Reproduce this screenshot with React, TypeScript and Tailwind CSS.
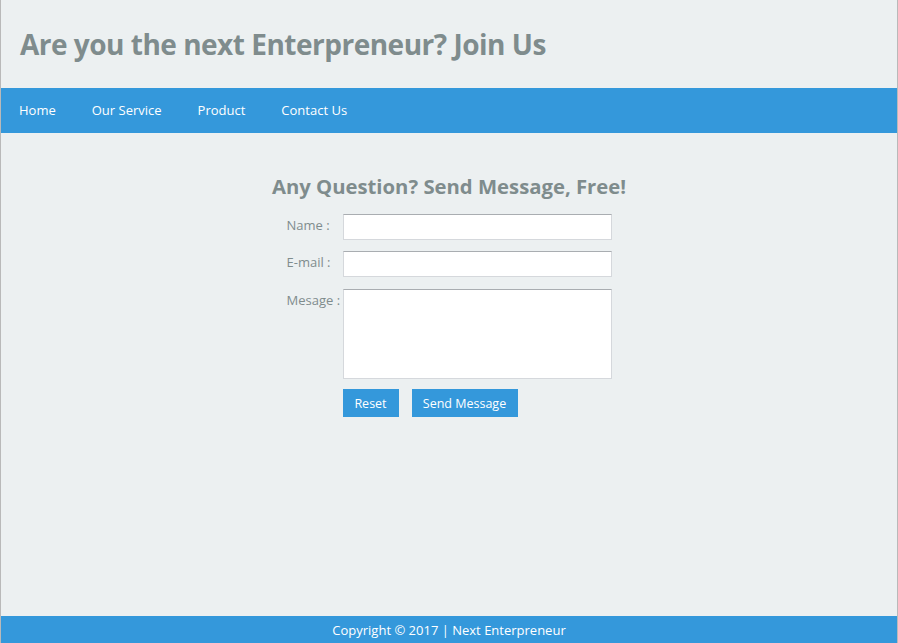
import React from "react";

export default function App() {
  const font = { fontFamily: '"Segoe UI", "Open Sans", "Noto Sans", sans-serif' };
  return (
    <div
      className="h-[643px] flex flex-col bg-[#ecf0f1] border-x border-[#b9b9b9] text-[#7f8c8d]"
      style={font}
    >
      <header className="h-[88px] flex items-center pl-[19px]">
        <h1 className="text-[28px] font-bold tracking-[-0.5px] text-[#7f8c8d]">
          Are you the next Enterpreneur? Join Us
        </h1>
      </header>
      <nav className="h-[45px] bg-[#3498db] flex items-center pt-[1px] text-white text-[13px]">
        <a className="px-[18px]">Home</a>
        <a className="px-[18px]">Our Service</a>
        <a className="px-[18px]">Product</a>
        <a className="px-[18px]">Contact Us</a>
      </nav>
      <main className="flex-1 flex flex-col items-center pt-[39px] pr-[1px]">
        <h2 className="text-[20.3px] font-bold leading-[28px] pl-[1px]">Any Question? Send Message, Free!</h2>
        <form className="mt-[14px] w-[326px] flex flex-col gap-[11px] text-[13px]">
          <div className="flex items-start">
            <label className="w-[57px] pl-[1px] pt-[2px]">Name :</label>
            <input className="w-[269px] h-[26px] bg-white border border-[#d5d8dc] border-t-[#a9adb1] outline-none" />
          </div>
          <div className="flex items-start">
            <label className="w-[57px] pl-[1px] pt-[2px]">E-mail :</label>
            <input className="w-[269px] h-[26px] bg-white border border-[#d5d8dc] border-t-[#a9adb1] outline-none" />
          </div>
          <div className="flex items-start mt-[1px]">
            <label className="w-[57px] pl-[1px] pt-[2px]">Mesage :</label>
            <textarea className="w-[269px] h-[90px] bg-white border border-[#d5d8dc] border-t-[#a9adb1] resize-none outline-none" />
          </div>
          <div className="flex pl-[57px] gap-[13px] -mt-[1px]">
            <button type="button" className="w-[56px] h-[28px] pt-[3px] bg-[#3498db] text-white text-[12.5px]">
              Reset
            </button>
            <button type="button" className="w-[106px] h-[28px] pt-[3px] bg-[#3498db] text-white text-[12.5px]">
              Send Message
            </button>
          </div>
        </form>
      </main>
      <footer className="h-[27px] bg-[#3498db] text-white text-[13px] flex items-center justify-center pt-[2px]">
        Copyright © 2017 | Next Enterpreneur
      </footer>
    </div>
  );
}
